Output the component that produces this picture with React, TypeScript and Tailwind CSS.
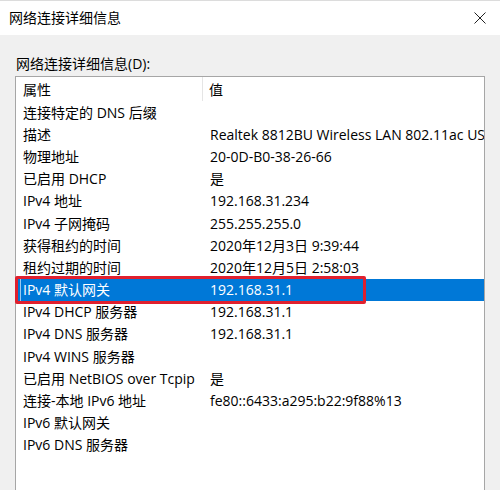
import React from "react";

const rows: [string, string][] = [
  ["连接特定的 DNS 后缀", ""],
  ["描述", "Realtek 8812BU Wireless LAN 802.11ac USB NIC"],
  ["物理地址", "20-0D-B0-38-26-66"],
  ["已启用 DHCP", "是"],
  ["IPv4 地址", "192.168.31.234"],
  ["IPv4 子网掩码", "255.255.255.0"],
  ["获得租约的时间", "2020年12月3日 9:39:44"],
  ["租约过期的时间", "2020年12月5日 2:58:03"],
  ["IPv4 默认网关", "192.168.31.1"],
  ["IPv4 DHCP 服务器", "192.168.31.1"],
  ["IPv4 DNS 服务器", "192.168.31.1"],
  ["IPv4 WINS 服务器", ""],
  ["已启用 NetBIOS over Tcpip", "是"],
  ["连接-本地 IPv6 地址", "fe80::6433:a295:b22:9f88%13"],
  ["IPv6 默认网关", ""],
  ["IPv6 DNS 服务器", ""],
];

export default function App() {
  return (
    <div
      className="relative w-[500px] h-[490px] overflow-hidden bg-[#f0f0f0] text-[14px] text-[#000] border-t border-[#dcdcdc]"
      style={{ fontFamily: '"Open Sans", "Noto Sans CJK SC", sans-serif' }}
    >
      <div className="h-[34px] bg-white flex items-center justify-between pl-[9px] pr-[14px]">
        <span className="leading-none">网络连接详细信息</span>
        <svg width="12" height="12" viewBox="0 0 12 12">
          <path d="M0.5 0.5 L11.5 11.5 M11.5 0.5 L0.5 11.5" stroke="#222" strokeWidth="1" />
        </svg>
      </div>
      <div className="pl-[15px] pr-[15px] pt-[17px]">
        <div className="pl-[1px] h-[23px] leading-[23px]">网络连接详细信息(D):</div>
        <div className="mt-[1px] w-[470px] h-[430px] bg-white border border-[#a6a6a6] overflow-hidden">
          <div className="flex h-[24px] items-center">
            <div className="w-[187px] h-full pl-[7px] flex items-center border-r border-[#e5e5e5]">属性</div>
            <div className="pl-[6px]">值</div>
          </div>
          {rows.map(([k, v], i) => {
            const sel = i === 8;
            return (
              <div
                key={i}
                className={`flex h-[22.2px] items-center whitespace-nowrap overflow-hidden ${sel ? "bg-[#0078d7] text-white" : ""}`}
              >
                {sel ? (
                  <div className="w-[187px] shrink-0 flex items-center h-full">
                    <div className="ml-[4px] h-full border-l border-[#9cc8ee] pl-[2px] flex items-center">{k}</div>
                  </div>
                ) : (
                  <div className="w-[187px] shrink-0 pl-[7px]">{k}</div>
                )}
                <div className="pl-[7px]">{v}</div>
              </div>
            );
          })}
        </div>
      </div>
      <div className="absolute left-[15px] top-[275px] w-[351px] h-[28px] border-[3px] border-[#e0202e] rounded-[2px]" />
    </div>
  );
}
